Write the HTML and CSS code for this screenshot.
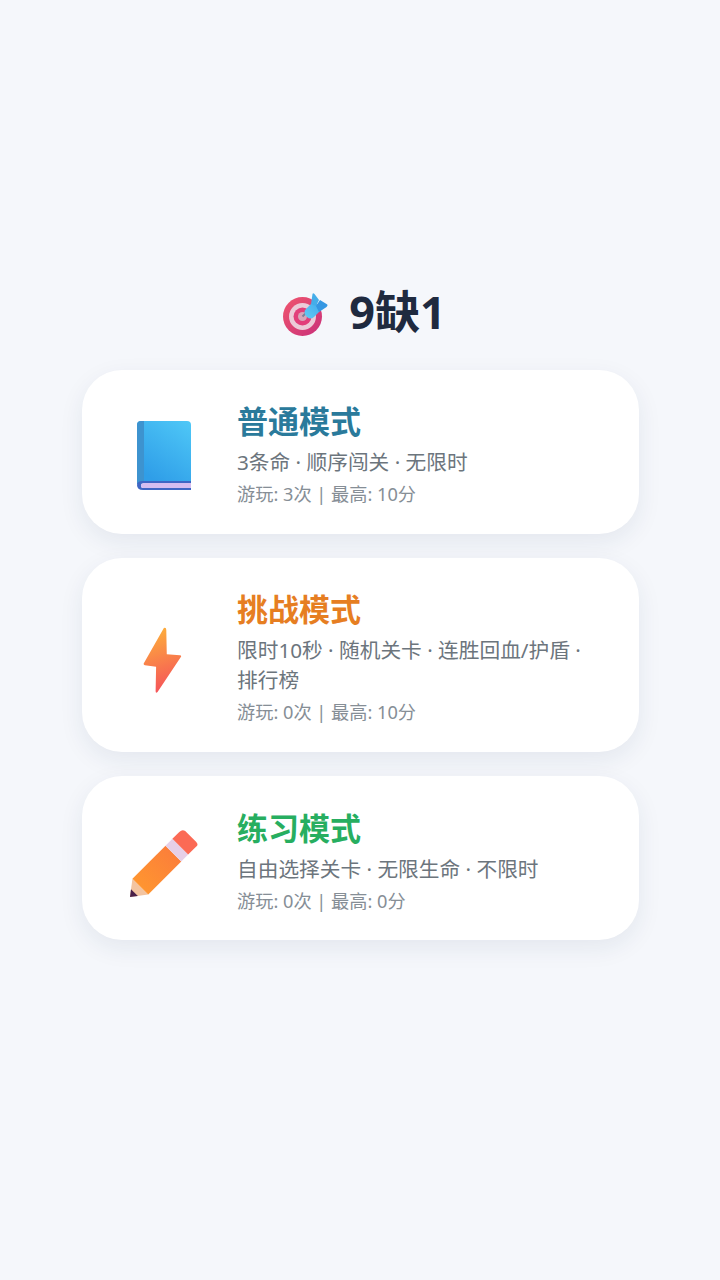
FILE: index.html
```html
<!DOCTYPE html>
<html lang="zh">

<head>
    <meta charset="UTF-8">
    <meta name="viewport" content="width=device-width, initial-scale=1.0">
    <title>9缺1</title>
    <link rel="stylesheet" href="styles.css">
</head>

<body>
    <div class="menu">
        <h1 class="menu-title">
            <svg class="title-icon" viewBox="0 0 45 44" aria-hidden="true">
                <defs>
                    <linearGradient id="ringGrad" x1="0" y1="0" x2="1" y2="1">
                        <stop offset="0" stop-color="#f0566e" />
                        <stop offset="1" stop-color="#c9307a" />
                    </linearGradient>
                    <linearGradient id="dartGrad" x1="0" y1="1" x2="1" y2="0">
                        <stop offset="0" stop-color="#62cdf6" />
                        <stop offset="1" stop-color="#3fa6ea" />
                    </linearGradient>
                </defs>
                <circle cx="19.500" cy="24.500" r="19.500" fill="url(#ringGrad)" />
                <circle cx="19.500" cy="24.500" r="13.500" fill="#eccbd8" />
                <circle cx="19.500" cy="24.500" r="9" fill="#e23f7a" />
                <circle cx="19.500" cy="24.500" r="4.500" fill="#d9a5b8" />
                <path d="M19.500 24.500 L25 19" stroke="#7d7f98" stroke-width="2" />
                <path d="M24 25 Q19.500 20.500 23 17 L31 9 L39 17 L31 25 Q27.500 28 24 25 Z" fill="url(#dartGrad)" />
                <path d="M28 12 L29.500 2 Q30 0.500 31.500 2 L36 8 L33 14 Z" fill="#45ade9" />
                <path d="M36 20 L43.500 15 Q45.500 13 43.500 12 L37 8 L33 14 Z" fill="#3597e2" />
            </svg>
            <span>9缺1</span>
        </h1>

        <div class="mode-card">
            <div class="mode-icon">
                <svg class="icon-svg" viewBox="0 0 54 70" aria-hidden="true">
                    <defs>
                        <linearGradient id="bookGrad" x1="1" y1="0" x2="0.4" y2="1">
                            <stop offset="0" stop-color="#4fc8f7" />
                            <stop offset="1" stop-color="#2f9ee8" />
                        </linearGradient>
                    </defs>
                    <path d="M4 1 H50 Q54 1 54 5 V63 H0 V5 Q0 1 4 1 Z" fill="url(#bookGrad)" />
                    <path d="M7 1 H4 Q0 1 0 5 V64 H7 Z" fill="#3d93cf" />
                    <path d="M54 61 H6 Q0 61 0 65 Q0 70 6 70 H54 V68 H6 Q4 68 4 65.500 Q4 63 6 63 H54 Z" fill="#3f66c4" />
                    <path d="M6 63 H54 V68 H6 Q4 68 4 65.500 Q4 63 6 63 Z" fill="#d5bdf0" />
                </svg>
            </div>
            <div class="mode-info">
                <h2 class="mode-name name-normal">普通模式</h2>
                <p class="mode-desc">3条命 · 顺序闯关 · 无限时</p>
                <p class="mode-stats">游玩: 3次 | 最高: 10分</p>
            </div>
        </div>

        <div class="mode-card">
            <div class="mode-icon">
                <svg class="icon-bolt" viewBox="0 0 40 68" aria-hidden="true">
                    <defs>
                        <linearGradient id="boltGrad" x1="0.3" y1="0" x2="0.5" y2="1">
                            <stop offset="0" stop-color="#fdb03a" />
                            <stop offset="1" stop-color="#f5525a" />
                        </linearGradient>
                    </defs>
                    <path d="M21.500 1 Q24 0 24 3 L24.500 28 L38 29 Q40 29 39 31 L15 67 Q13 69 13 66 L13.500 41 L2 39.500 Q0 39 1 37 Z" fill="url(#boltGrad)" />
                </svg>
            </div>
            <div class="mode-info">
                <h2 class="mode-name name-challenge">挑战模式</h2>
                <p class="mode-desc">限时10秒 · 随机关卡 · 连胜回血/护盾 · 排行榜</p>
                <p class="mode-stats">游玩: 0次 | 最高: 10分</p>
            </div>
        </div>

        <div class="mode-card">
            <div class="mode-icon">
                <svg class="icon-pencil" viewBox="0 0 71 71" aria-hidden="true">
                    <defs>
                        <linearGradient id="pencilGrad" x1="0" y1="1" x2="1" y2="0">
                            <stop offset="0" stop-color="#ff9a2e" />
                            <stop offset="1" stop-color="#fb7a3c" />
                        </linearGradient>
                    </defs>
                    <path d="M3.500 51.500 L19.500 67.500 L1 70 Z" fill="#f3c4a0" />
                    <path d="M2 62 L9 69 L1 70 Z" fill="#4a2048" />
                    <path d="M3.500 51.500 L37 18 L53 34 L19.500 67.500 Z" fill="url(#pencilGrad)" />
                    <path d="M37 18 L44 11 L60 27 L53 34 Z" fill="#e6cfe8" />
                    <path d="M44 11 L51 4 Q54 1 57 3 L68 14 Q71 17 68 19 L60 27 Z" fill="#fb6a55" />
                </svg>
            </div>
            <div class="mode-info">
                <h2 class="mode-name name-practice">练习模式</h2>
                <p class="mode-desc">自由选择关卡 · 无限生命 · 不限时</p>
                <p class="mode-stats">游玩: 0次 | 最高: 0分</p>
            </div>
        </div>
    </div>
</body>

</html>
```

FILE: styles.css
```css
* {
    margin: 0;
    padding: 0;
    box-sizing: border-box;
    font-family: "Noto Sans", "Noto Sans CJK SC", sans-serif;
}

body {
    width: 720px;
    height: 1280px;
    background-color: #f5f7fb;
    overflow: hidden;
}

.menu {
    display: flex;
    flex-direction: column;
    gap: 24.200px;
    width: 557px;
    margin-left: 82px;
    padding-top: 278px;
}

.menu-title {
    display: flex;
    align-items: center;
    justify-content: center;
    gap: 21px;
    height: 62px;
    margin-bottom: 5.800px;
    padding-left: 8px;
    font-size: 45px;
    font-weight: 700;
    color: #1f2a3f;
}

.title-icon {
    width: 45px;
    height: 44px;
    margin-top: 10px;
}

.mode-card {
    display: flex;
    align-items: center;
    gap: 37px;
    padding: 31.300px 48px 25.700px 46px;
    background-color: #fff;
    border-radius: 40px;
    box-shadow: 0 8px 24px rgba(30, 50, 90, 0.08);
}

.mode-icon {
    display: flex;
    align-items: center;
    justify-content: center;
    flex: 0 0 72px;
}

.icon-svg {
    display: block;
    height: 70px;
}

.icon-pencil {
    display: block;
    height: 70px;
    margin-top: 3px;
}

.icon-bolt {
    display: block;
    height: 66px;
    margin-top: 4px;
    margin-right: 3px;
}

.mode-info {
    flex: 1;
}

.mode-name {
    font-size: 31px;
    font-weight: 700;
    line-height: 40px;
    margin-bottom: 6px;
}

.name-normal {
    color: #2a7a9b;
}

.name-challenge {
    color: #e67e22;
}

.name-practice {
    color: #27ae60;
}

.mode-desc {
    font-size: 20.700px;
    line-height: 30px;
    color: #6c757d;
}

.mode-stats {
    margin-top: 4px;
    font-size: 18.200px;
    line-height: 27px;
    color: #868e96;
}
```
